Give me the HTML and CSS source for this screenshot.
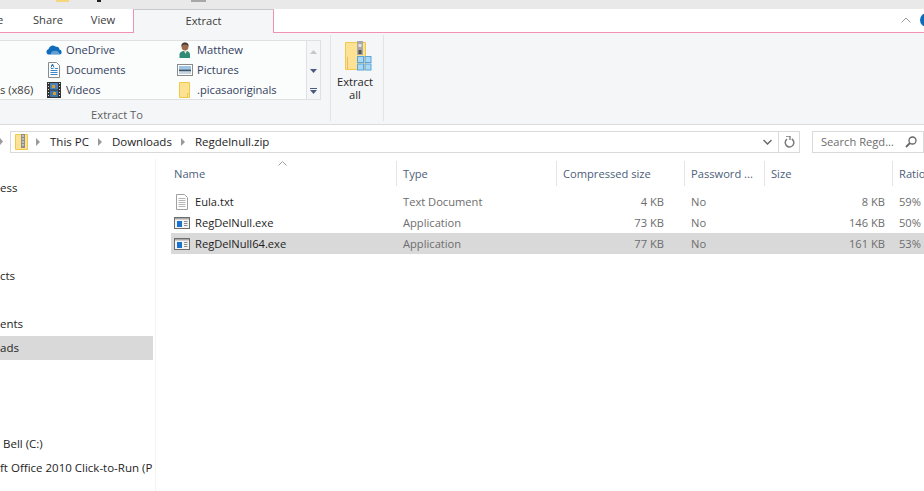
FILE: index.html
```html
<!DOCTYPE html>
<html lang="en">
<head>
<meta charset="utf-8">
<title>Regdelnull.zip</title>
<link rel="stylesheet" href="styles.css">
</head>
<body>
<div class="window">
  <div class="titlebar">
    <span class="tb-icon tb-folder"></span>
    <span class="tb-icon tb-black"></span>
    <span class="tb-icon tb-gray"></span>
  </div>
  <div class="tabs">
    <span class="tab tab-cut">e</span>
    <span class="tab tab-share">Share</span>
    <span class="tab tab-view">View</span>
    <span class="tab tab-active">Extract</span>
    <span class="tabs-fill"></span>
    <svg class="collapse" width="10" height="6" viewBox="0 0 10 6"><path d="M.5 5.500 5 1l4.500 4.500" fill="none" stroke="#9a9a9a" stroke-width="1"/></svg>
    <span class="help"></span>
  </div>
  <div class="ribbon">
    <div class="group group-to">
      <div class="gallery">
        <div class="places">
          <span class="place place-cut">s (x86)</span>
          <span class="place">
            <svg class="ic" width="16" height="16" viewBox="0 0 16 16"><path d="M2 12.500a3 3 0 0 1 .6-5.500A4.500 4.500 0 0 1 10 4.800a3 3 0 0 1 3.400 2.700 2.600 2.600 0 0 1 .6 5z" fill="#0f6cbd"/><path d="M5 12.500c-.5-2.500 1.500-4 3.500-3.500 2-1 4.500.5 5.500 3.500z" fill="#fff" opacity=".35"/></svg>
            OneDrive</span>
          <span class="place">
            <svg class="ic" width="16" height="16" viewBox="0 0 16 16"><path d="M2.500.5h8l3 3v12h-11z" fill="#fff" stroke="#8a8a8a"/><path d="M5 3.500h2M5 6.500h2.500M9 6.500h3M4.500 8.500h7M4.500 10.500h7M4.500 12.500h7" stroke="#3c87c8" stroke-width="1"/><path d="M5 5.500 6.500 2 8 5.500" fill="none" stroke="#2b6fa8"/></svg>
            Documents</span>
          <span class="place">
            <svg class="ic" width="16" height="16" viewBox="0 0 16 16"><rect x="1" y="0" width="14" height="16" fill="#333"/><path d="M2 1.500h1M2 4.500h1M2 7.500h1M2 10.500h1M2 13.500h1M13 1.500h1M13 4.500h1M13 7.500h1M13 10.500h1M13 13.500h1" stroke="#ddd"/><rect x="4" y="1" width="8" height="6.500" fill="#4d83b5"/><rect x="4" y="8.500" width="8" height="6.500" fill="#3f77ab"/><path d="M6 3h3v3H6zM7 10h3v3H7z" fill="#d99b36"/></svg>
            Videos</span>
          <span class="place place-user">
            <svg class="ic" width="16" height="16" viewBox="0 0 16 16"><path d="M2.500 16v-3.500C2.500 10 5 9.500 6 9h4c1.500.5 3 1.500 3 3.500V16z" fill="#2f8a76"/><path d="M7 9l1.500 3L10 9z" fill="#e9dccb"/><circle cx="8" cy="5" r="3.400" fill="#9c6b4d"/><path d="M4.500 5C4 1.500 6 .5 8 .5s4 1 3.500 4.500c-.5-2-2-2.500-3.500-2.500S5 3 4.500 5z" fill="#3d3a38"/></svg>
            Matthew</span>
          <span class="place">
            <svg class="ic" width="16" height="16" viewBox="0 0 16 16"><rect x=".5" y="2.500" width="15" height="11" fill="#fff" stroke="#8a8a8a"/><rect x="2" y="4" width="12" height="3.500" fill="#9ec4e4"/><rect x="2" y="7.500" width="12" height="2" fill="#39546e"/><rect x="2" y="9.500" width="12" height="2.500" fill="#c8d6e2"/></svg>
            Pictures</span>
          <span class="place">
            <svg class="ic" width="16" height="16" viewBox="0 0 16 16"><path d="M2.500.5h10v15h-10z" fill="#fde293" stroke="#efc84c"/><path d="M10.500 15.500v-4h2" fill="none" stroke="#efc84c"/></svg>
            .picasaoriginals</span>
        </div>
        <div class="scroller">
          <svg width="7" height="4" viewBox="0 0 7 4"><path d="M0 4 3.500 0 7 4z" fill="#c6c6c6"/></svg>
          <svg width="7" height="4" viewBox="0 0 7 4"><path d="M0 0h7L3.500 4z" fill="#4a5a80"/></svg>
          <svg width="7" height="6" viewBox="0 0 7 6"><path d="M0 .5h7" stroke="#4a5a80"/><path d="M0 2h7L3.500 6z" fill="#4a5a80"/></svg>
        </div>
      </div>
      <div class="group-label">Extract To</div>
    </div>
    <div class="group group-all">
      <svg class="zip-large" width="28" height="32" viewBox="0 0 28 32">
        <path d="M1.500 1.500h20v27h-20z" fill="#fde293" stroke="#efc84c"/>
        <path d="M3.500 16v12" stroke="#f1b95e"/>
        <rect x="13" y="0" width="6" height="14" fill="#a9a9a9"/>
        <rect x="14.500" y="3" width="3" height="3" fill="#e3e3e3"/>
        <rect x="14.500" y="9" width="3" height="4" fill="#555"/>
        <g fill="#a8d8f6" stroke="#5da5d8">
          <rect x="13.500" y="15.500" width="6" height="6"/><rect x="21" y="15.500" width="6" height="6"/>
          <rect x="13.500" y="23" width="6" height="6"/><rect x="21" y="23" width="6" height="6"/>
        </g>
      </svg>
      <span class="all-label">Extract<br>all</span>
    </div>
  </div>
  <div class="addressbar">
    <svg class="up-cut" width="3" height="7" viewBox="0 0 3 7"><path d="M0 0 3 3.500 0 7z" fill="#9a9a9a"/></svg>
    <div class="address">
      <svg class="zip-small" width="14" height="16" viewBox="0 0 14 16"><path d="M.5.500h12v15H.5z" fill="#fde293" stroke="#efc84c"/><rect x="6" y="0" width="4" height="14" fill="#8f8f8f"/><path d="M7 2h2M7 5h2M7 8h2M7 11h2" stroke="#eee"/></svg>
      <span class="chev"></span><span class="crumb">This PC</span>
      <span class="chev"></span><span class="crumb">Downloads</span>
      <span class="chev"></span><span class="crumb">Regdelnull.zip</span>
      <span class="addr-fill"></span>
      <svg class="drop" width="9" height="6" viewBox="0 0 9 6"><path d="M.5 1 4.500 5l4-4" fill="none" stroke="#6a6a6a" stroke-width="1.500"/></svg>
      <span class="refresh">
        <svg width="11" height="12" viewBox="0 0 11 12"><path d="M7.800 3A4.300 4.300 0 1 1 3 3.200" fill="none" stroke="#7a7a7a" stroke-width="1.500"/><path d="M2 0h4v4" fill="none" stroke="#7a7a7a" stroke-width="1.300"/></svg>
      </span>
    </div>
    <div class="search">
      <span class="search-text">Search Regd...</span>
      <svg width="12" height="12" viewBox="0 0 12 12"><circle cx="7.500" cy="4.500" r="3.500" fill="none" stroke="#666" stroke-width="1.300"/><path d="M5 7 1 11" stroke="#666" stroke-width="1.800"/></svg>
    </div>
  </div>
  <div class="main">
    <nav class="nav">
      <div class="nav-row nav-section-end">ess</div>
      <div class="nav-row">cts</div>
      <div class="nav-row"></div>
      <div class="nav-row">ents</div>
      <div class="nav-row selected">ads</div>
      <div class="nav-row"></div><div class="nav-row"></div><div class="nav-row"></div>
      <div class="nav-row nav-drive">Bell (C:)</div>
      <div class="nav-row">ft Office 2010 Click-to-Run (P</div>
    </nav>
    <section class="list">
      <div class="sort-mark"><svg width="9" height="5" viewBox="0 0 9 5"><path d="M.5 4.500 4.500.5l4 4" fill="none" stroke="#a0a0a0"/></svg></div>
      <div class="row head">
        <span class="cell name">Name</span>
        <span class="cell sep">Type</span>
        <span class="cell sep">Compressed size</span>
        <span class="cell sep">Password ...</span>
        <span class="cell sep">Size</span>
        <span class="cell sep">Ratio</span>
      </div>
      <div class="row item">
        <span class="cell name file"><svg class="fic" width="16" height="16" viewBox="0 0 16 16"><path d="M2.500.5h8l3 3v12h-11z" fill="#fff" stroke="#a0a0a0"/><path d="M4.500 4.500h7M4.500 6.500h7M4.500 8.500h7M4.500 10.500h7M4.500 12.500h7" stroke="#b5b5b5"/></svg>Eula.txt</span>
        <span class="cell type">Text Document</span>
        <span class="cell num">4 KB</span>
        <span class="cell pw">No</span>
        <span class="cell num num-size">8 KB</span>
        <span class="cell ratio">59%</span>
      </div>
      <div class="row item">
        <span class="cell name file"><svg class="fic" width="16" height="16" viewBox="0 0 16 16"><rect x=".5" y="2.500" width="15" height="11" fill="#f4f4f4" stroke="#6d6d6d"/><rect x="1" y="3" width="14" height="1.500" fill="#a8a8a8"/><rect x="3" y="6" width="5" height="6" fill="#1a73d1"/><path d="M10 6.500h3.500M10 8.500h3.500M10 10.500h3.500" stroke="#8a8a8a"/></svg>RegDelNull.exe</span>
        <span class="cell type">Application</span>
        <span class="cell num">73 KB</span>
        <span class="cell pw">No</span>
        <span class="cell num num-size">146 KB</span>
        <span class="cell ratio">50%</span>
      </div>
      <div class="row item active">
        <span class="cell name file"><svg class="fic" width="16" height="16" viewBox="0 0 16 16"><rect x=".5" y="2.500" width="15" height="11" fill="#f4f4f4" stroke="#6d6d6d"/><rect x="1" y="3" width="14" height="1.500" fill="#a8a8a8"/><rect x="3" y="6" width="5" height="6" fill="#1a73d1"/><path d="M10 6.500h3.500M10 8.500h3.500M10 10.500h3.500" stroke="#8a8a8a"/></svg>RegDelNull64.exe</span>
        <span class="cell type">Application</span>
        <span class="cell num">77 KB</span>
        <span class="cell pw">No</span>
        <span class="cell num num-size">161 KB</span>
        <span class="cell ratio">53%</span>
      </div>
    </section>
  </div>
</div>
</body>
</html>
```

FILE: styles.css
```css
* { box-sizing: border-box; }
html, body { margin: 0; height: 100%; background: #fff; overflow: hidden; }
body { font-family: "Open Sans", "Noto Sans", "Liberation Sans", sans-serif; font-size: 11.15px; color: #1e1e1e; }
.window { width: 924px; height: 491px; display: flex; flex-direction: column; overflow: hidden; }

.titlebar { height: 9px; background: #e9e9e9; display: flex; align-items: flex-start; flex: none; }
.tb-icon { display: block; height: 2px; }
.tb-folder { width: 13px; margin-left: 56px; background: #f6d77c; }
.tb-black { width: 4px; margin-left: 28px; background: #222; }
.tb-gray { width: 15px; margin-left: 90px; background: #a8a8a8; }

.tabs { height: 24px; flex: none; display: flex; align-items: stretch; background: #fff; position: relative; }
.tab { display: flex; align-items: center; justify-content: center; color: #3c3c3c; border-bottom: 1px solid #f291b8; padding-bottom: 2px; }
.tab-cut { justify-content: flex-start; margin-left: -3px; width: 19px; }
.tab-share { width: 62px; padding-left: 2px; }
.tab-view { width: 55px; padding-right: 5px; }
.tab-active { width: 141px; background: #f5f6f7; border: 1px solid #f291b8; border-bottom: 0; border-top-color: #c9c9c9; }
.tabs-fill { flex: 1; border-bottom: 1px solid #f291b8; }
.collapse { position: absolute; left: 901px; top: 8px; }
.help { position: absolute; left: 920px; top: 4px; width: 14px; height: 14px; border-radius: 50%; background: #0f6cbd; }

.ribbon { height: 92px; flex: none; background: #f5f6f7; border-bottom: 1px solid #dadbdc; display: flex; padding-top: 2px; }
.group { border-right: 1px solid #e2e3e4; height: 86px; }
.group-to { width: 331px; display: flex; flex-direction: column; padding-top: 5px; }
.gallery { width: 321px; height: 60px; display: flex; border: 1px solid #dfe0e1; border-left: 0; background: #fbfcfc; flex: none; }
.places { width: 306px; margin-top: -2px; display: grid; grid-template-columns: 46px 131px 1fr; grid-template-rows: repeat(3, 20px); }
.place { display: flex; align-items: center; color: #34415e; }
.place-cut { grid-column: 1; grid-row: 3; color: #3c3c3c; }
.place:nth-child(2) { grid-column: 2; grid-row: 1; }
.place:nth-child(3) { grid-column: 2; grid-row: 2; }
.place:nth-child(4) { grid-column: 2; grid-row: 3; }
.place:nth-child(5) { grid-column: 3; grid-row: 1; }
.place:nth-child(6) { grid-column: 3; grid-row: 2; }
.place:nth-child(7) { grid-column: 3; grid-row: 3; }
.ic { flex: none; margin-right: 4px; margin-top: 2px; }
.scroller { flex: 1; background: #f5f6f7; border-left: 1px solid #dfe0e1; display: flex; flex-direction: column; align-items: center; padding-top: 9px; gap: 15px; }
.group-label { width: 100%; text-align: center; color: #5f5f5f; margin-top: 5px; padding-right: 96px; line-height: 20px; }
.group-all { width: 53px; display: flex; flex-direction: column; align-items: center; padding-top: 6px; padding-right: 4px; }
.zip-large { flex: none; margin-left: 6px; }
.all-label { text-align: center; line-height: 13px; margin-top: 2px; color: #262626; }

.addressbar { height: 34px; flex: none; display: flex; align-items: flex-start; padding-top: 6px; background: #fff; }
.up-cut { margin-top: 7px; flex: none; }
.address { width: 790px; flex: none; margin-left: 7px; height: 22px; border: 1px solid #d9d9d9; display: flex; align-items: center; padding-left: 4px; color: #1e1e1e; }
.zip-small { flex: none; margin-right: 7px; }
.chev { width: 0; height: 0; border-left: 4px solid #9a9a9a; border-top: 4px solid transparent; border-bottom: 4px solid transparent; margin-right: 10px; flex: none; }
.crumb { margin-right: 9px; margin-top: -2px; font-size: 11.5px; }
.addr-fill { flex: 1; }
.drop { margin-right: 6px; flex: none; }
.refresh { width: 21px; height: 20px; border-left: 1px solid #d9d9d9; display: flex; align-items: center; justify-content: center; flex: none; }
.search { width: 112px; margin-left: 12px; height: 22px; border: 1px solid #d9d9d9; display: flex; align-items: center; padding-left: 8px; color: #6d6d6d; flex: none; }
.search-text { margin-right: 11px; margin-top: -2px; white-space: nowrap; }

.main { flex: 1; display: flex; min-height: 0; }
.nav { width: 156px; flex: none; border-right: 1px solid #f4f4f4; padding-top: 17px; font-size: 11.5px; }
.nav-row { height: 24px; line-height: 24px; width: 153px; white-space: nowrap; overflow: hidden; color: #1e1e1e; }
.nav-section-end { margin-bottom: 64px; }
.nav-drive { padding-left: 3px; }
.nav-row.selected { background: #d9d9d9; }

.list { flex: 1; padding-left: 15px; min-width: 0; position: relative; padding-top: 1px; }
.sort-mark { position: absolute; left: 122px; top: 2px; line-height: 0; }
.row { display: grid; grid-template-columns: 225px 160px 128px 80px 128px 1fr; align-items: center; }
.head { height: 27px; margin-bottom: 4px; color: #4c607a; }
.head .cell { height: 25px; display: flex; align-items: center; white-space: nowrap; overflow: hidden; }
.head .name { padding-left: 3px; }
.head .sep { border-left: 1px solid #e5e5e5; padding-left: 6px; }
.item { height: 21px; }
.item.active { background: #d9d9d9; }
.file { display: flex; align-items: center; padding-left: 3px; }
.fic { margin-right: 5px; flex: none; }
.type, .num, .pw, .ratio { color: #6d6d6d; }
.type { padding-left: 7px; }
.num { text-align: right; padding-right: 20px; }
.num-size { padding-right: 7px; }
.pw { padding-left: 7px; }
.ratio { padding-left: 7px; }
```
